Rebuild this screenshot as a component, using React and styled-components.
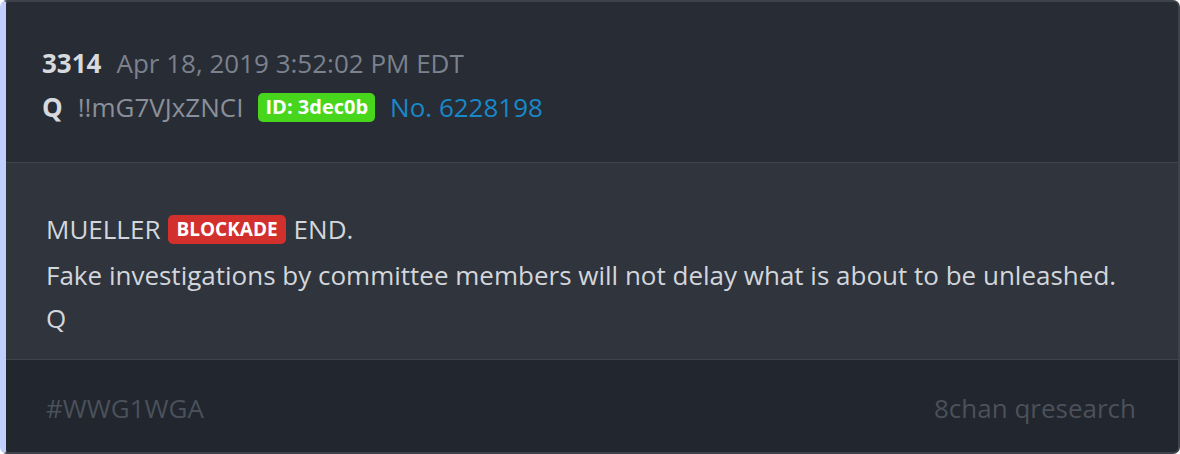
import React from "react";
import styled, { createGlobalStyle } from "styled-components";

const Global = createGlobalStyle`
  html, body { margin: 0; padding: 0; background: #ffffff; }
  body { font-family: "Open Sans", "Noto Sans", sans-serif; }
`;

const Card = styled.article`
  box-sizing: border-box;
  width: 1180px;
  height: 454px;
  display: flex;
  flex-direction: column;
  border-radius: 7px;
  border-top: 2px solid #3e434b;
  border-right: 2px solid #3e434b;
  border-bottom: 2px solid #3e434b;
  border-left: 6px solid #c1cffd;
  overflow: hidden;
  background: #282c34;
`;

const Header = styled.header`
  background: #282c34;
  padding: 39px 36px 33px;
  border-bottom: 1px solid #3f454e;
`;

const MetaLine = styled.div`
  display: flex;
  align-items: center;
  gap: 15px;
  height: 44px;
  font-size: 26px;
  white-space: nowrap;
`;

const Strong = styled.span`
  font-weight: 700;
  color: #d6d9de;
`;

const Muted = styled.span`
  color: ${(p) => p.$color || "#7b828e"};
`;

const Badge = styled.span`
  display: inline-flex;
  align-items: center;
  height: 29px;
  padding: 0 ${(p) => p.$pad || "7px"};
  border-radius: 5px;
  background: ${(p) => p.$bg};
  color: #ffffff;
  font-weight: 700;
  font-size: ${(p) => p.$size || "20px"};
  line-height: 1;
`;

const Link = styled.a`
  color: #1888c8;
  text-decoration: none;
`;

const Body = styled.section`
  flex: 1;
  background: #2f343d;
  padding: 43px 40px 0;
  border-bottom: 1px solid #3f454e;
  color: #d3d6db;
  font-size: 26px;
`;

const TextLine = styled.div`
  display: flex;
  align-items: center;
  gap: ${(p) => p.$gap || "0"};
  height: ${(p) => p.$h || "44px"};
  white-space: nowrap;
`;

const Footer = styled.footer`
  background: #22262e;
  height: 92px;
  padding: 4px 42px 0 40px;
  box-sizing: border-box;
  display: flex;
  align-items: center;
  justify-content: space-between;
  color: #4b515b;
  font-size: 26px;
`;

export default function App() {
  return (
    <>
      <Global />
      <Card>
        <Header>
          <MetaLine>
            <Strong>3314</Strong>
            <Muted>Apr 18, 2019 3:52:02 PM EDT</Muted>
          </MetaLine>
          <MetaLine>
            <Strong>Q</Strong>
            <Muted $color="#8a909a">!!mG7VJxZNCI</Muted>
            <Badge $bg="#47d61c">ID: 3dec0b</Badge>
            <Link href="#">No. 6228198</Link>
          </MetaLine>
        </Header>
        <Body>
          <TextLine $h="46px" $gap="8px">
            <span>MUELLER</span>
            <Badge $bg="#d1302c" $size="19px" $pad="8px">BLOCKADE</Badge>
            <span>END.</span>
          </TextLine>
          <TextLine $h="45px">
            Fake investigations by committee members will not delay what is about to be unleashed.
          </TextLine>
          <TextLine $h="42px">Q</TextLine>
        </Body>
        <Footer>
          <span>#WWG1WGA</span>
          <span>8chan qresearch</span>
        </Footer>
      </Card>
    </>
  );
}
